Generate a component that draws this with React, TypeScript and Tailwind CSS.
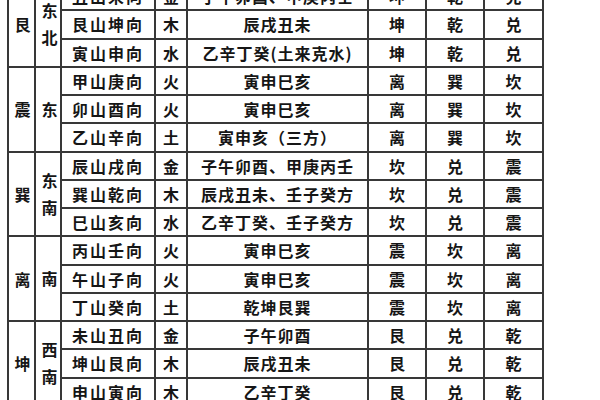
import React from "react";

type Row = [string, string, string, string, string, string];

const groups: { gua: string; dir: string[]; rows: Row[] }[] = [
  {
    gua: "艮",
    dir: ["东", "北"],
    rows: [
      ["丑山未向", "金", "子午卯酉、甲庚丙壬", "坤", "乾", "兑"],
      ["艮山坤向", "木", "辰戌丑未", "坤", "乾", "兑"],
      ["寅山申向", "水", "乙辛丁癸(土来克水)", "坤", "乾", "兑"],
    ],
  },
  {
    gua: "震",
    dir: ["东"],
    rows: [
      ["甲山庚向", "火", "寅申巳亥", "离", "巽", "坎"],
      ["卯山酉向", "火", "寅申巳亥", "离", "巽", "坎"],
      ["乙山辛向", "土", "寅申亥（三方）", "离", "巽", "坎"],
    ],
  },
  {
    gua: "巽",
    dir: ["东", "南"],
    rows: [
      ["辰山戌向", "金", "子午卯酉、甲庚丙壬", "坎", "兑", "震"],
      ["巽山乾向", "木", "辰戌丑未、壬子癸方", "坎", "兑", "震"],
      ["巳山亥向", "水", "乙辛丁癸、壬子癸方", "坎", "兑", "震"],
    ],
  },
  {
    gua: "离",
    dir: ["南"],
    rows: [
      ["丙山壬向", "火", "寅申巳亥", "震", "坎", "离"],
      ["午山子向", "火", "寅申巳亥", "震", "坎", "离"],
      ["丁山癸向", "土", "乾坤艮巽", "震", "坎", "离"],
    ],
  },
  {
    gua: "坤",
    dir: ["西", "南"],
    rows: [
      ["未山丑向", "金", "子午卯酉", "艮", "兑", "乾"],
      ["坤山艮向", "木", "辰戌丑未", "艮", "兑", "乾"],
      ["申山寅向", "木", "乙辛丁癸", "艮", "兑", "乾"],
    ],
  },
];

const cell = "border-2 border-[#383838] p-0 text-center align-middle";

export default function App() {
  return (
    <div
      className="w-[600px] h-[400px] overflow-hidden bg-white text-[#161616]"
      style={{ fontFamily: '"Noto Sans CJK SC", "Noto Sans", sans-serif' }}
    >
      <table className="table-fixed border-collapse mt-[-19px] ml-[7px] w-[537px] text-[16px] font-bold">
        <colgroup>
          <col className="w-[27px]" />
          <col className="w-[26px]" />
          <col className="w-[94px]" />
          <col className="w-[32px]" />
          <col className="w-[181px]" />
          <col className="w-[58px]" />
          <col className="w-[58px]" />
          <col className="w-[59px]" />
        </colgroup>
        <tbody>
          {groups.map((g) =>
            g.rows.map((r, i) => (
              <tr key={g.gua + i} className="h-[28.25px]">
                {i === 0 && (
                  <td rowSpan={3} className={cell + " pl-[2px]"}>
                    {g.gua}
                  </td>
                )}
                {i === 0 && (
                  <td rowSpan={3} className={cell + " leading-[27px] pl-[3px]"}>
                    {g.dir.map((d) => (
                      <div key={d}>{d}</div>
                    ))}
                  </td>
                )}
                <td className={cell + " tracking-[2px] leading-none"}>{r[0]}</td>
                <td className={cell + " leading-none"}>{r[1]}</td>
                <td className={cell + " tracking-[1px] leading-none"}>{r[2]}</td>
                <td className={cell + " leading-none"}>{r[3]}</td>
                <td className={cell + " leading-none"}>{r[4]}</td>
                <td className={cell + " leading-none"}>{r[5]}</td>
              </tr>
            ))
          )}
        </tbody>
      </table>
    </div>
  );
}
